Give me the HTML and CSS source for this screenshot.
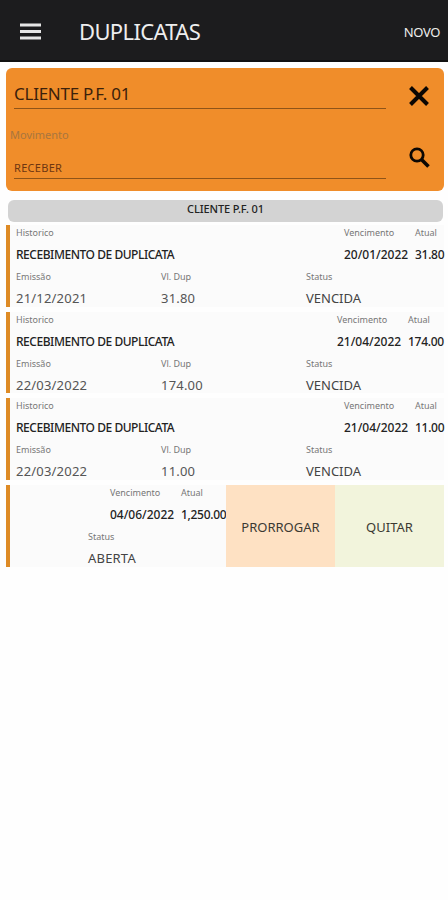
FILE: index.html
```html
<!DOCTYPE html>
<html lang="pt-BR">
<head>
<meta charset="utf-8">
<title>Duplicatas</title>
<link rel="stylesheet" href="styles.css">
</head>
<body>
<header class="bar">
  <svg class="menu" viewBox="0 0 21 17"><path d="M0 2h21M0 8.5h21M0 15h21" stroke="#e6e6e6" stroke-width="3"/></svg>
  <h1>DUPLICATAS</h1>
  <span class="new">NOVO</span>
</header>
<section class="filter">
  <div class="fields">
    <div class="client">CLIENTE P.F. 01</div>
    <div class="caption">Movimento</div>
    <div class="kind">RECEBER</div>
  </div>
  <div class="tools">
    <svg class="close" viewBox="0 0 20 20"><path d="M1.5 1.5l17 17M18.5 1.5l-17 17" stroke="#0c0703" stroke-width="4"/></svg>
    <svg class="search" viewBox="0 0 21 21"><circle cx="8" cy="8" r="6.2" fill="none" stroke="#0c0703" stroke-width="2.8"/><path d="M12.2 12.2l7.3 7.3" stroke="#0c0703" stroke-width="3.6"/></svg>
  </div>
</section>
<div class="group">CLIENTE P.F. 01</div>
<main class="list">
  <article class="row">
    <div class="top">
      <div class="cell grow"><span class="label">Historico</span><b class="history">RECEBIMENTO DE DUPLICATA</b></div>
      <div class="cell due"><span class="label">Vencimento</span><b class="date">20/01/2022</b></div>
      <div class="cell amount"><span class="label">Atual</span><b>31.80</b></div>
    </div>
    <div class="bottom">
      <div class="cell"><span class="label">Emissão</span><span class="value">21/12/2021</span></div>
      <div class="cell"><span class="label">Vl. Dup</span><span class="value">31.80</span></div>
      <div class="cell"><span class="label">Status</span><span class="value status">VENCIDA</span></div>
    </div>
  </article>
  <article class="row">
    <div class="top">
      <div class="cell grow"><span class="label">Historico</span><b class="history">RECEBIMENTO DE DUPLICATA</b></div>
      <div class="cell due"><span class="label">Vencimento</span><b class="date">21/04/2022</b></div>
      <div class="cell amount wide"><span class="label">Atual</span><b>174.00</b></div>
    </div>
    <div class="bottom">
      <div class="cell"><span class="label">Emissão</span><span class="value">22/03/2022</span></div>
      <div class="cell"><span class="label">Vl. Dup</span><span class="value">174.00</span></div>
      <div class="cell"><span class="label">Status</span><span class="value status">VENCIDA</span></div>
    </div>
  </article>
  <article class="row">
    <div class="top">
      <div class="cell grow"><span class="label">Historico</span><b class="history">RECEBIMENTO DE DUPLICATA</b></div>
      <div class="cell due"><span class="label">Vencimento</span><b class="date">21/04/2022</b></div>
      <div class="cell amount"><span class="label">Atual</span><b>11.00</b></div>
    </div>
    <div class="bottom">
      <div class="cell"><span class="label">Emissão</span><span class="value">22/03/2022</span></div>
      <div class="cell"><span class="label">Vl. Dup</span><span class="value">11.00</span></div>
      <div class="cell"><span class="label">Status</span><span class="value status">VENCIDA</span></div>
    </div>
  </article>
  <article class="row swiped">
    <div class="content">
      <div class="top">
        <div class="cell grow"></div>
        <div class="cell due"><span class="label">Vencimento</span><b class="date">04/06/2022</b></div>
        <div class="cell amount full"><span class="label">Atual</span><b>1,250.00</b></div>
      </div>
      <div class="bottom">
        <div class="cell"><span class="label">Status</span><span class="value status">ABERTA</span></div>
      </div>
    </div>
    <div class="action extend">PRORROGAR</div>
    <div class="action settle">QUITAR</div>
  </article>
</main>
</body>
</html>
```
FILE: styles.css
```css
* { box-sizing: border-box; }
body {
  margin: 0;
  height: 900px;
  overflow: hidden;
  background: #fefefe;
  color: #222;
  font-family: "Noto Sans", "Open Sans", sans-serif;
  white-space: nowrap;
}
svg { display: block; }
.bar {
  display: flex;
  align-items: center;
  height: 62px;
  padding: 2px 8px 0 20px;
  background: #1c1c1e;
  border-bottom: 2px solid #111;
  color: #eee;
}
.menu { width: 21px; height: 17px; }
h1 { margin: 0 0 0 38px; font-size: 22px; font-weight: 400; letter-spacing: -0.65px; }
.new { margin-left: auto; font-size: 13px; letter-spacing: -0.4px; padding-top: 1px; }
.filter {
  display: flex;
  height: 123px;
  margin: 6px 4px 0 6px;
  border-radius: 6px;
  background: #f08d2a;
}
.fields { width: 380px; padding-left: 8px; }
.client {
  height: 41px;
  padding-top: 12px;
  border-bottom: 1px solid #8f5418;
  color: #3b210b;
  font-size: 17px;
  line-height: 27px;
  letter-spacing: -0.25px;
}
.caption { margin: 17px 0 0 -4px; color: #a8763f; font-size: 11px; line-height: 18px; }
.kind {
  height: 35px;
  padding-top: 14px;
  border-bottom: 1px solid #8f5418;
  color: #6e3611;
  font-size: 11px;
  line-height: 20px;
  letter-spacing: 0.3px;
}
.tools { padding: 18px 0 0 23px; }
.close { width: 20px; height: 20px; }
.search { width: 21px; height: 21px; margin-top: 41px; }
.group {
  height: 22px;
  margin: 9px 5px 3px 8px;
  border-radius: 6px;
  background: #d3d3d3;
  color: #222;
  font-size: 11px;
  font-weight: 500;
  line-height: 18px;
  letter-spacing: -0.1px;
  text-align: center;
}
.list { display: grid; grid-template-columns: minmax(0, 1fr); gap: 5px; margin: 0 4px 0 6px; }
.row {
  height: 81.7px;
  border-left: 4px solid #de8b25;
  background: #fbfbfb;
}
.top { display: flex; padding-left: 6px; }
.cell { display: flex; flex-direction: column; }
.grow { flex: 1; }
.label { margin-bottom: 5px; color: #777; font-size: 9px; line-height: 15px; }
.top b { margin-bottom: 4px; font-size: 12px; font-weight: 500; line-height: 20px; }
.top .history { letter-spacing: -0.46px; }
.due { width: 71px; flex: none; }
.amount { width: 29px; flex: none; }
.amount b { letter-spacing: -0.3px; }
.wide { width: 36px; }
.full { width: 45px; }
.bottom { display: grid; grid-template-columns: 145px 145px 1fr; padding-left: 6px; }
.value { color: #555; font-size: 13px; line-height: 19px; letter-spacing: 0.2px; }
.status { letter-spacing: 0; color: #444; }
.swiped .status { letter-spacing: 0.2px; }
.swiped { display: flex; }
.content { width: 216px; height: 100%; }
.swiped .bottom { grid-template-columns: 1fr; padding-left: 78px; }
.action {
  display: flex;
  align-items: center;
  justify-content: center;
  width: 109px;
  padding-top: 3px;
  color: #3c3a33;
  font-size: 13px;
}
.extend { background: #fee1c3; }
.settle { background: #f2f4dc; }
```
